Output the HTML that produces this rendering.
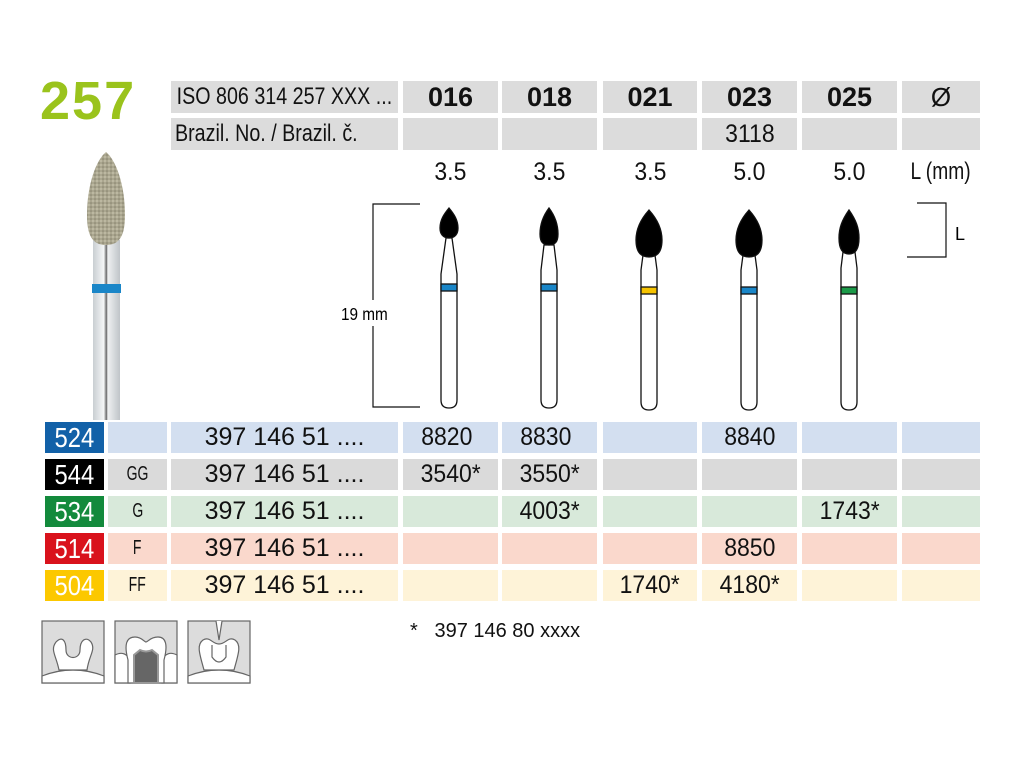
<!DOCTYPE html>
<html><head><meta charset="utf-8"><style>
body{margin:0;width:1024px;height:768px;background:#fff;position:relative;overflow:hidden;font-family:"Liberation Sans",sans-serif;color:#111}
.c{position:absolute;display:flex;align-items:center;justify-content:center;white-space:nowrap}
.c span{display:inline-block;transform:scaleX(.92)}
.h{background:#dcdcdc}
.b{font-weight:bold;font-size:27px}
.d{font-size:25px}
.t{position:absolute;white-space:nowrap}
.n{color:#fff;font-size:28px}
.n span{transform:scaleX(.85)}
.g{font-size:20px}
.g span{transform:scaleX(.7)}
</style></head><body>
<div class="t" style="left:40px;top:70px;font-size:54px;font-weight:bold;color:#9ac31c;letter-spacing:2px">257</div>

<div class="c h" style="left:171px;top:81px;width:227px;height:32px;font-size:24px"><span style="transform:scaleX(.82)">ISO 806 314 257 XXX ...</span></div>
<div class="c h" style="left:171px;top:118px;width:227px;height:32px;font-size:24px;justify-content:flex-start"><span style="transform:scaleX(.82);transform-origin:0 50%;margin-left:4px">Brazil. No. / Brazil. č.</span></div>

<div class="c h b" style="left:403px;top:81px;width:95px;height:32px">016</div>
<div class="c h b" style="left:502px;top:81px;width:95px;height:32px">018</div>
<div class="c h b" style="left:603px;top:81px;width:94px;height:32px">021</div>
<div class="c h b" style="left:702px;top:81px;width:95px;height:32px">023</div>
<div class="c h b" style="left:802px;top:81px;width:95px;height:32px">025</div>
<div class="c h" style="left:902px;top:81px;width:78px;height:32px;font-size:26px">Ø</div>
<div class="c h" style="left:403px;top:118px;width:95px;height:32px"></div>
<div class="c h" style="left:502px;top:118px;width:95px;height:32px"></div>
<div class="c h" style="left:603px;top:118px;width:94px;height:32px"></div>
<div class="c h d" style="left:702px;top:118px;width:95px;height:32px"><span>3118</span></div>
<div class="c h" style="left:802px;top:118px;width:95px;height:32px"></div>
<div class="c h" style="left:902px;top:118px;width:78px;height:32px"></div>

<div class="c d" style="left:403px;top:156px;width:95px;height:32px"><span>3.5</span></div>
<div class="c d" style="left:502px;top:156px;width:95px;height:32px"><span>3.5</span></div>
<div class="c d" style="left:603px;top:156px;width:94px;height:32px"><span>3.5</span></div>
<div class="c d" style="left:702px;top:156px;width:95px;height:32px"><span>5.0</span></div>
<div class="c d" style="left:802px;top:156px;width:95px;height:32px"><span>5.0</span></div>
<div class="c d" style="left:902px;top:156px;width:78px;height:32px;font-size:24px"><span style="transform:scaleX(.8)">L (mm)</span></div>

<svg style="position:absolute;left:0;top:0" width="1024" height="768">
<defs><linearGradient id="sh" x1="0" x2="1"><stop offset="0" stop-color="#c9ced2"/><stop offset=".4" stop-color="#f4f6f7"/><stop offset=".5" stop-color="#666"/><stop offset=".55" stop-color="#eef0f1"/><stop offset="1" stop-color="#bfc4c8"/></linearGradient>
<pattern id="grit" width="4" height="4" patternUnits="userSpaceOnUse"><rect width="4" height="4" fill="#aaa68f"/><circle cx="1" cy="1" r="0.9" fill="#c8c4ae"/><circle cx="3" cy="3" r="0.8" fill="#85816c"/></pattern></defs>
<rect x="93" y="240" width="27" height="180" fill="url(#sh)"/>
<rect x="92" y="284" width="29" height="9" fill="#1a86c8"/>
<path d="M106 152 C96 160 87 185 87 215 C87 235 92 245 106 245 C120 245 125 235 125 215 C125 185 116 160 106 152Z" fill="url(#grit)"/>
<path d="M420 204 H373 V300 M373 326 V407 H420" fill="none" stroke="#111" stroke-width="1.2"/>
<text x="341" y="320" font-size="18" font-family="Liberation Sans,sans-serif" transform="translate(341 0) scale(.85 1) translate(-341 0)">19 mm</text>
<path d="M917 203 H946 V257 H907" fill="none" stroke="#111" stroke-width="1.2"/>
<text x="955" y="240" font-size="18" font-family="Liberation Sans,sans-serif">L</text>
<g stroke="#111" stroke-width="1.3">
<path d="M446 238 L441 274 V400 Q441 408 449 408 Q457 408 457 400 V274 L452 238Z" fill="#fff"/>
<rect x="441" y="284" width="16" height="7" fill="#1a86c8"/>
<path d="M449 208 C444 214 440 220 440 228 C440 234 443 238 449 238 C455 238 458 234 458 228 C458 220 454 214 449 208Z" fill="#000"/>
<path d="M544 245 L541 270 V400 Q541 408 549 408 Q557 408 557 400 V270 L554 245Z" fill="#fff"/>
<rect x="541" y="284" width="16" height="7" fill="#1a86c8"/>
<path d="M549 208 C543 216 540 224 540 234 C540 242 543 245 549 245 C555 245 558 242 558 234 C558 224 555 216 549 208Z" fill="#000"/>
<path d="M643 255 L641 270 V402 Q641 410 649 410 Q657 410 657 402 V270 L655 255Z" fill="#fff"/>
<rect x="641" y="287" width="16" height="7" fill="#f6c300"/>
<path d="M649 210 C640 220 636 230 636 240 C636 252 641 257 649 257 C657 257 662 252 662 240 C662 230 658 220 649 210Z" fill="#000"/>
<path d="M743 255 L741 270 V402 Q741 410 749 410 Q757 410 757 402 V270 L755 255Z" fill="#fff"/>
<rect x="741" y="287" width="16" height="7" fill="#1a86c8"/>
<path d="M749 210 C740 220 736 230 736 240 C736 252 741 257 749 257 C757 257 762 252 762 240 C762 230 758 220 749 210Z" fill="#000"/>
<path d="M843 252 L841 268 V402 Q841 410 849 410 Q857 410 857 402 V268 L855 252Z" fill="#fff"/>
<rect x="841" y="287" width="16" height="7" fill="#1b9a48"/>
<path d="M849 210 C842 220 839 228 839 238 C839 250 843 254 849 254 C855 254 859 250 859 238 C859 228 856 220 849 210Z" fill="#000"/>
</g>
<g stroke="#666" stroke-width="1.2">
<rect x="42" y="621" width="62" height="62" fill="#dcdcdc"/>
<path d="M42 676 Q73 664 104 676 V683 H42Z" fill="#fff"/>
<path d="M59 670 C56 655 50 650 56 642 C62 636 66 640 66 650 C66 660 80 660 80 650 C80 640 86 636 91 642 C96 650 89 655 87 670Z" fill="#fff"/>
<rect x="115" y="621" width="62" height="62" fill="#dcdcdc"/>
<path d="M115 655 Q125 650 130 660 V683 H115Z M177 655 Q167 650 162 660 V683 H177Z" fill="#fff"/>
<path d="M128 660 C124 645 126 637 135 637 C142 637 144 642 146 642 C148 642 150 637 158 637 C166 637 168 645 164 660 V683 H128Z" fill="#fff"/>
<path d="M134 683 V655 L140 650 Q146 653 152 650 L158 655 V683Z" fill="#666" stroke="#999" stroke-width="2"/>
<rect x="188" y="621" width="62" height="62" fill="#dcdcdc"/>
<path d="M188 676 Q219 664 250 676 V683 H188Z" fill="#fff"/>
<path d="M204 670 C200 655 196 645 203 640 C210 636 212 644 219 644 C226 644 228 636 235 640 C242 645 238 655 234 670Z" fill="#fff"/>
<path d="M212 645 V657 Q219 667 226 657 V645" fill="none"/>
<path d="M216 621 L219 640 L222 621" fill="#fff"/>
</g>
</svg>

<div class="c n" style="left:45px;top:422px;width:59px;height:31px;background:#1261a8"><span>524</span></div>
<div class="c n" style="left:45px;top:459px;width:59px;height:31px;background:#000"><span>544</span></div>
<div class="c n" style="left:45px;top:496px;width:59px;height:31px;background:#138a3c"><span>534</span></div>
<div class="c n" style="left:45px;top:533px;width:59px;height:31px;background:#d9121c"><span>514</span></div>
<div class="c n" style="left:45px;top:570px;width:59px;height:31px;background:#fcc800"><span>504</span></div>

<div class="c" style="left:108px;top:422px;width:59px;height:31px;background:#d3dff0"></div>
<div class="c g" style="left:108px;top:459px;width:59px;height:31px;background:#dadada"><span>GG</span></div>
<div class="c g" style="left:108px;top:496px;width:59px;height:31px;background:#d8e9da"><span>G</span></div>
<div class="c g" style="left:108px;top:533px;width:59px;height:31px;background:#fad8cc"><span>F</span></div>
<div class="c g" style="left:108px;top:570px;width:59px;height:31px;background:#fef3d8"><span>FF</span></div>

<div style="position:absolute;left:171px;top:422px;width:809px;height:31px;background:linear-gradient(90deg,#d3dff0 227px,#fff 227px 232px,#d3dff0 232px 327px,#fff 327px 331px,#d3dff0 331px 426px,#fff 426px 432px,#d3dff0 432px 526px,#fff 526px 531px,#d3dff0 531px 626px,#fff 626px 631px,#d3dff0 631px 726px,#fff 726px 731px,#d3dff0 731px)"></div>
<div style="position:absolute;left:171px;top:459px;width:809px;height:31px;background:linear-gradient(90deg,#dadada 227px,#fff 227px 232px,#dadada 232px 327px,#fff 327px 331px,#dadada 331px 426px,#fff 426px 432px,#dadada 432px 526px,#fff 526px 531px,#dadada 531px 626px,#fff 626px 631px,#dadada 631px 726px,#fff 726px 731px,#dadada 731px)"></div>
<div style="position:absolute;left:171px;top:496px;width:809px;height:31px;background:linear-gradient(90deg,#d8e9da 227px,#fff 227px 232px,#d8e9da 232px 327px,#fff 327px 331px,#d8e9da 331px 426px,#fff 426px 432px,#d8e9da 432px 526px,#fff 526px 531px,#d8e9da 531px 626px,#fff 626px 631px,#d8e9da 631px 726px,#fff 726px 731px,#d8e9da 731px)"></div>
<div style="position:absolute;left:171px;top:533px;width:809px;height:31px;background:linear-gradient(90deg,#fad8cc 227px,#fff 227px 232px,#fad8cc 232px 327px,#fff 327px 331px,#fad8cc 331px 426px,#fff 426px 432px,#fad8cc 432px 526px,#fff 526px 531px,#fad8cc 531px 626px,#fff 626px 631px,#fad8cc 631px 726px,#fff 726px 731px,#fad8cc 731px)"></div>
<div style="position:absolute;left:171px;top:570px;width:809px;height:31px;background:linear-gradient(90deg,#fef3d8 227px,#fff 227px 232px,#fef3d8 232px 327px,#fff 327px 331px,#fef3d8 331px 426px,#fff 426px 432px,#fef3d8 432px 526px,#fff 526px 531px,#fef3d8 531px 626px,#fff 626px 631px,#fef3d8 631px 726px,#fff 726px 731px,#fef3d8 731px)"></div>

<div class="c d" style="left:171px;top:422px;width:227px;height:31px">397 146 51 ....</div>
<div class="c d" style="left:171px;top:459px;width:227px;height:31px">397 146 51 ....</div>
<div class="c d" style="left:171px;top:496px;width:227px;height:31px">397 146 51 ....</div>
<div class="c d" style="left:171px;top:533px;width:227px;height:31px">397 146 51 ....</div>
<div class="c d" style="left:171px;top:570px;width:227px;height:31px">397 146 51 ....</div>

<div class="c d" style="left:403px;top:422px;width:88px;height:31px"><span>8820</span></div>
<div class="c d" style="left:502px;top:422px;width:88px;height:31px"><span>8830</span></div>
<div class="c d" style="left:702px;top:422px;width:95px;height:31px"><span>8840</span></div>
<div class="c d" style="left:403px;top:459px;width:95px;height:31px"><span>3540*</span></div>
<div class="c d" style="left:502px;top:459px;width:95px;height:31px"><span>3550*</span></div>
<div class="c d" style="left:502px;top:496px;width:95px;height:31px"><span>4003*</span></div>
<div class="c d" style="left:802px;top:496px;width:95px;height:31px"><span>1743*</span></div>
<div class="c d" style="left:702px;top:533px;width:95px;height:31px"><span>8850</span></div>
<div class="c d" style="left:603px;top:570px;width:94px;height:31px"><span>1740*</span></div>
<div class="c d" style="left:702px;top:570px;width:95px;height:31px"><span>4180*</span></div>

<div class="t" style="left:410px;top:620px;font-size:20px">*&nbsp;&nbsp; 397 146 80 xxxx</div>
</body></html>
